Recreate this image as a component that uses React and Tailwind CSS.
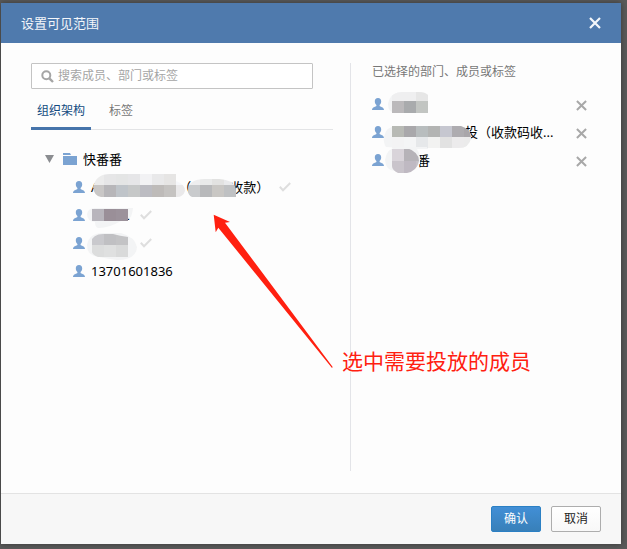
import { useState } from 'react'

const CELL = 12

const UserIcon = () => (
  <svg width="12" height="12" viewBox="0 0 12 12" className="shrink-0" fill="#7ba3d2" aria-hidden="true">
    <path d="M6 0C8.2 0 9.2 1.3 9.2 3.2C9.2 4.9 8.6 6.2 7.6 6.9V8C8 9 12 8.8 12 12H0C0 8.8 4 9 4.4 8V6.9C3.4 6.2 2.8 4.9 2.8 3.2C2.8 1.3 3.8 0 6 0Z" />
  </svg>
)

const FolderIcon = () => (
  <svg width="14" height="12" viewBox="0 0 14 12" className="shrink-0" fill="#7ba3d2" aria-hidden="true">
    <path d="M0 0H7L8 2H0ZM0 3H14V12H0Z" />
  </svg>
)

const CheckIcon = () => (
  <svg width="12" height="10" viewBox="0 0 12 10" className="shrink-0" fill="none" stroke="#dedede" strokeWidth="2" aria-hidden="true">
    <path d="M0.8 4.8L4 8.2L11.2 1" />
  </svg>
)

const SearchIcon = () => (
  <svg width="13" height="13" viewBox="0 0 13 13" className="shrink-0" fill="none" stroke="#a5a5a5" aria-hidden="true">
    <circle cx="5.3" cy="5.3" r="4" strokeWidth="2" />
    <path d="M8.3 8.3L12 12" strokeWidth="2.4" />
  </svg>
)

const CrossIcon = ({ size, width }) => (
  <svg width={size} height={size} viewBox="0 0 12 12" fill="none" stroke="currentColor" strokeWidth={width} aria-hidden="true">
    <path d="M1 1L11 11M11 1L1 11" />
  </svg>
)

// Blurred-out part of a name: a grid of flat cells cut by a brush shape
function Mosaic({ id, className, width, height, top = 0, left = 0, shape, halo, rows }) {
  return (
    <svg width={width} height={height} viewBox={`0 0 ${width} ${height}`} className={`absolute ${className}`} aria-hidden="true">
      {halo && <path d={halo} fill="#f3f4f5" />}
      <clipPath id={id}><path d={shape} /></clipPath>
      <g clipPath={`url(#${id})`}>
        {rows.map((row, y) => row.map((color, x) => (
          <rect key={`${x}-${y}`} x={left + x * CELL} y={top + y * CELL} width={CELL} height={CELL} fill={color} shapeRendering="crispEdges" />
        )))}
      </g>
    </svg>
  )
}

const members = [
  {
    key: 'm1',
    checked: true,
    name: <>A<span className="inline-block w-[79px]" />（<span className="inline-block w-[39px]" />收款）</>,
    cover: <>
      <Mosaic id="m1a" className="left-0 top-0" width={97} height={28} top={0} left={1}
        shape="M2 14Q5 1 19 1H85V8Q94 11 94 18Q92 24 86 24H10Q3 23 2 14Z"
        rows={[
          ['#ececec', '#e6e6e7', '#e4e5e5', '#e6e6e8', '#f2f2f4', '#e9e9ea', '#e6e5e4', '#f6f7fa'],
          ['#c9c7c6', '#b7b6b9', '#bfc4c9', '#c6c8c8', '#bcbcc2', '#bebbb9', '#c5c3c1', '#eae9ea'],
        ]} />
      <Mosaic id="m1b" className="left-24 top-0" width={50} height={28} left={1}
        shape="M1 18Q1 6 18 6H32Q49 7 49 18V24H5Q1 22 1 18Z"
        rows={[
          ['#eeeeef', '#e9eaea', '#e2e2e1', '#e9eaec', '#e9eaec'],
          ['#c9cbcd', '#b8b9bb', '#c9c7c4', '#bfc1c3', '#bcbdbf'],
        ]} />
    </>,
  },
  {
    key: 'm2',
    checked: true,
    name: <span className="inline-block w-[39px] text-right">.</span>,
    cover: <Mosaic id="m2" className="-left-1 top-0" width={50} height={32} top={8} left={5}
      halo="M0 13Q1 7 8 7H46Q45 17 41 18V20H34Q22 27 12 27Q8 27 8 21Q0 20 0 13Z"
      shape="M1 8H41V20H4Q1 18 1 8Z"
      rows={[['#b8b5bc', '#9a8f98', '#9c929b']]} />,
  },
  {
    key: 'm3',
    checked: true,
    name: <span className="inline-block w-[39px]" />,
    cover: <Mosaic id="m3" className="-left-2 top-0" width={58} height={34} top={4} left={9}
      halo="M4 16Q6 4 20 4H38Q52 8 54 18Q53 31 34 31Q26 30 16 28Q4 27 4 16Z"
      shape="M7 14Q10 5 20 5H30Q37 7 45 8V28H15Q7 26 7 14Z"
      rows={[
        ['#c9c9cd', '#c0c0c3', '#c3c3c5'],
        ['#dcdddd', '#dfe0e0', '#d9dada'],
      ]} />,
  },
  { key: 'm4', checked: false, name: '13701601836', cover: null },
]

const picked = [
  {
    key: 'p1',
    name: '',
    cover: <Mosaic id="p1" className="-left-1 top-0" width={44} height={28} top={-1} left={5}
      halo="M1 14Q3 2 16 2H32Q38 2 41 5V23H8Q1 22 1 14Z"
      shape="M1 14Q3 2 16 2H32Q38 2 41 5V23H5Q1 20 1 14Z"
      rows={[
        ['#efeff0', '#efeff0', '#e6e6e6'],
        ['#bbb9bb', '#a9abad', '#c2c5c2'],
      ]} />,
  },
  {
    key: 'p2',
    name: <><span className="inline-block w-[74px]" />投（收款码收...</>,
    cover: <Mosaic id="p2" className="-left-2 top-0" width={90} height={36} top={7} left={9}
      halo="M1 19Q3 8 14 8H78Q88 11 88 20Q86 30 76 30H45V31Q20 30 3 29Q0 24 1 19Z"
      shape="M9 8H78Q88 11 88 20Q86 30 76 30H9Z"
      rows={[
        ['#b8bab5', '#a9a8ab', '#b8bdbe', '#b3b4b3', '#c6c7d0', '#aeacb0', '#a9a6aa'],
        ['#f3f3f4', '#f4f5f6', '#e6e8ea', '#f2f2f1', '#e2e2e2', '#ecebec', '#ebebeb'],
      ]} />,
  },
  {
    key: 'p3',
    name: '快番番',
    cover: <Mosaic id="p3" className="-left-2 top-0" width={46} height={28} top={3} left={9}
      halo="M2 14Q4 2 14 1H44V3H34Q38 10 37 18L20 25H12Q3 25 2 14Z"
      shape="M9 2H24Q36 6 36 15Q34 25 24 27H15Q9 24 9 20Z"
      rows={[
        ['#d9d4da', '#b6b3b8', '#b6b3b8'],
        ['#c9c4cb', '#bfb9c2', '#c5c1c8'],
      ]} />,
  },
]

export default function App() {
  const [tab, setTab] = useState('org')
  const tabs = [
    { key: 'org', label: '组织架构' },
    { key: 'tag', label: '标签' },
  ]

  return (
    <div className="min-h-screen flex flex-col bg-[#5a5a5a] pt-[3px] pl-px pr-1.5 pb-[5px] font-['Noto_Sans','Noto_Sans_CJK_SC',sans-serif] text-xs">
      <div role="dialog" aria-label="设置可见范围" className="flex-1 flex flex-col bg-[#fdfdfd] shadow-[0_0_6px_rgba(0,0,0,0.4)]">
        <header className="h-10 shrink-0 flex items-center justify-between px-5 bg-[#4f7aad] text-[#f3f6fa]">
          <h1 className="text-[13px] leading-5">设置可见范围</h1>
          <button aria-label="关闭"><CrossIcon size={12} width={2.2} /></button>
        </header>

        <div className="relative flex-1 grid grid-cols-[32fr_25fr] pt-5 pb-[22px] pl-[30px] pr-5">
          <section className="border-r border-[#e3e4e8] pr-[17px]">
            <label className="mr-5 h-[26px] flex items-center gap-1 border border-[#c4c4c4] bg-white pl-[9px] rounded-[1px]">
              <SearchIcon />
              <input type="text" placeholder="搜索成员、部门或标签" aria-label="搜索成员、部门或标签"
                className="flex-1 min-w-0 bg-transparent text-xs outline-none placeholder:text-[#a5a5a5]" />
            </label>
            <div role="tablist" className="mt-1.5 flex gap-3 border-b border-[#e3e4e6]">
              {tabs.map(t => (
                <button key={t.key} role="tab" aria-selected={tab === t.key} onClick={() => setTab(t.key)}
                  className={`h-[35px] px-1.5 -mb-px border-b-3 ${tab === t.key ? 'border-[#4674ab] text-[#124a80]' : 'border-transparent text-[#777]'}`}>
                  {t.label}</button>))}
            </div>
            <div className="mt-[15px] pl-3.5 text-[13px] text-black">
              <div className="h-7 flex items-center">
                <svg width="9" height="8" viewBox="0 0 9 8" fill="#8b8d91" aria-hidden="true"><path d="M0 0H9L4.5 8Z" /></svg>
                <span className="ml-[9px] flex"><FolderIcon /></span>
                <span className="ml-1.5 pt-0.5">快番番</span>
              </div>
              <ul className="pl-7">
                {members.map(m => (
                  <li key={m.key} className="h-7 flex items-center gap-1.5">
                    <UserIcon />
                    <div className="relative h-7 flex items-center gap-2.5 whitespace-nowrap">
                      <span className="pt-0.5">{m.name}</span>
                      {m.checked && <CheckIcon />}
                      {m.cover}
                    </div>
                  </li>))}
              </ul>
            </div>
          </section>

          <section className="pl-[21px] pr-3.5">
            <h2 className="leading-[18px] text-[#777]">已选择的部门、成员或标签</h2>
            <ul className="mt-[9px] text-[13px] text-black">
              {picked.map(p => (
                <li key={p.key} className="h-7 flex items-center gap-[7px]">
                  <UserIcon />
                  <div className="relative flex-1 h-7 flex items-center whitespace-nowrap">
                    <span className="pt-0.5">{p.name}</span>
                    {p.cover}
                  </div>
                  <button aria-label="移除" className="pt-0.5 text-[#a8a8a8]"><CrossIcon size={11} width={2.2} /></button>
                </li>))}
            </ul>
          </section>

          <svg width="122" height="156" viewBox="0 0 122 156" className="absolute left-[211px] top-[170px]" fill="#ff2010" aria-hidden="true">
            <path d="M1.7 1.7L18 9L13 9.7L120.7 154L120 155L6.3 14.7L3.7 19.3Z" />
          </svg>
          <p className="absolute left-[341px] top-[303px] text-[21px] leading-[30px] text-[#ff2010] whitespace-nowrap">选中需要投放的成员</p>
        </div>

        <footer className="shrink-0 flex justify-end gap-2.5 border-t border-[#e3e3e3] bg-[#f7f7f7] px-5 py-3">
          <button className="w-[50px] h-[26px] rounded-[2px] border border-[#2b80c4] bg-linear-to-b from-[#428fd6] to-[#3880b9] text-white">确认</button>
          <button className="w-[50px] h-[26px] rounded-[2px] border border-[#adadad] bg-linear-to-b from-white to-[#f8f8f8] text-[#222]">取消</button>
        </footer>
      </div>
    </div>
  )
}
